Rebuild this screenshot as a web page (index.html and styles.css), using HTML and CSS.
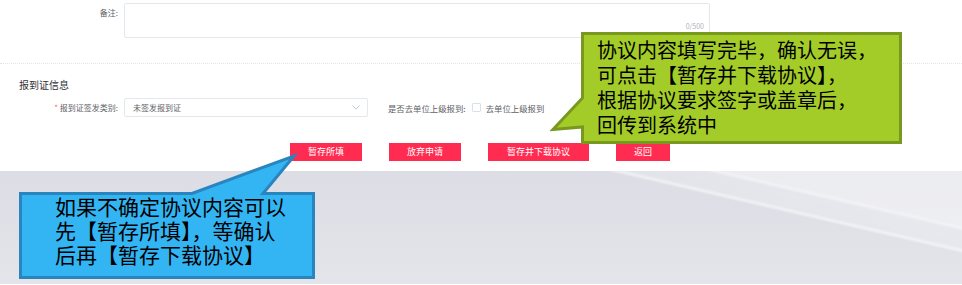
FILE: index.html
```html
<!DOCTYPE html>
<html lang="zh-CN">
<head>
<meta charset="utf-8">
<title>报到证信息</title>
<link rel="stylesheet" href="styles.css">
</head>
<body>
<div class="page">
  <div class="form">
    <div class="remark-row">
      <label class="lbl lbl-top">备注:</label>
      <div class="textarea"><span class="count">0/500</span></div>
    </div>
    <div class="divider"></div>
    <div class="section-title">报到证信息</div>
    <div class="field-row">
      <div class="field">
        <label class="lbl"><span class="req">*</span> 报到证签发类别:</label>
        <div class="select">
          <span class="select-text">未签发报到证</span>
          <svg class="chevron" width="8" height="5" viewBox="0 0 8 5"><path d="M0.5 0.5 L4 4 L7.5 0.5" fill="none" stroke="#c0c4cc" stroke-width="0.9"/></svg>
        </div>
      </div>
      <div class="field field-check">
        <label class="lbl2">是否去单位上级报到:</label>
        <span class="checkbox"></span>
        <span class="cb-text">去单位上级报到</span>
      </div>
    </div>
    <div class="actions">
      <button class="btn btn-w72">暂存所填</button>
      <button class="btn btn-w72">放弃申请</button>
      <button class="btn btn-w101">暂存并下载协议</button>
      <button class="btn btn-w54">返回</button>
    </div>
  </div>
  <div class="footer-bg"></div>

  <div class="callout callout-green">
    <svg class="callout-shape" width="356" height="118" viewBox="0 0 356 118">
      <path d="M32.5 3.5 H350.5 V112.5 H32.5 V97 L3 99.5 L32.5 68 Z" fill="#a4cc29" stroke="#78981f" stroke-width="3" stroke-linejoin="miter"/>
    </svg>
    <div class="callout-text green-text">协议内容填写完毕，确认无误，<br>可点击【暂存并下载协议】，<br>根据协议要求签字或盖章后，<br>回传到系统中</div>
  </div>

  <div class="callout callout-blue">
    <svg class="callout-shape" width="302" height="132" viewBox="0 0 302 132">
      <path d="M4.5 43.5 H176 L278 6 L247 43.5 H297.5 V127.5 H4.5 Z" fill="#33b5f4" stroke="#2a85be" stroke-width="3" stroke-linejoin="miter"/>
    </svg>
    <div class="callout-text blue-text">如果不确定协议内容可以<br>先【暂存所填】，等确认<br>后再【暂存下载协议】</div>
  </div>
</div>
</body>
</html>
```

FILE: styles.css
```css
html, body {
  margin: 0;
  padding: 0;
  background: #ffffff;
}

body {
  font-family: "Noto Sans CJK SC", "Liberation Sans", sans-serif;
  color: #333;
}

.page {
  position: relative;
  width: 962px;
  height: 285px;
  overflow: hidden;
}

.form {
  display: flex;
  flex-direction: column;
}

.remark-row {
  display: flex;
  padding-top: 3px;
}

.lbl {
  width: 118px;
  padding-right: 6px;
  text-align: right;
  font-size: 8px;
  line-height: 10px;
  color: #606266;
  white-space: nowrap;
  flex: none;
}

.lbl-top {
  padding-top: 5px;
}

.req {
  color: #f56c6c;
}

.textarea {
  position: relative;
  width: 584px;
  height: 33px;
  border: 1px solid #e4e7ed;
  border-radius: 2px;
  background: #fff;
}

.count {
  position: absolute;
  right: 5px;
  bottom: 7px;
  font-size: 7px;
  line-height: 8px;
  color: #b0b3b8;
}

.divider {
  margin-top: 25px;
  height: 0;
  border-top: 1px dotted #e2e4e8;
}

.section-title {
  margin-top: 15px;
  padding-left: 19px;
  font-size: 10px;
  line-height: 12px;
  color: #303133;
}

.field-row {
  display: flex;
  align-items: center;
  margin-top: 7px;
}

.field {
  display: flex;
  align-items: center;
}

.select {
  display: flex;
  align-items: center;
  justify-content: space-between;
  height: 17px;
  border: 1px solid #e4e7ed;
  border-radius: 2px;
  padding: 0 7px 0 8px;
  box-sizing: content-box;
  width: 227px;
}

.select-text {
  font-size: 8px;
  line-height: 10px;
  color: #606266;
}

.chevron {
  display: block;
}

.field-check {
  margin-left: 20px;
}

.lbl2 {
  font-size: 8.4px;
  line-height: 10px;
  color: #606266;
  white-space: nowrap;
}

.checkbox {
  width: 7px;
  height: 7px;
  margin-left: 6px;
  border: 1px solid #dcdfe6;
  border-radius: 1px;
  background: #fff;
}

.cb-text {
  margin-left: 5px;
  font-size: 8.4px;
  line-height: 10px;
  color: #606266;
}

.actions {
  display: flex;
  gap: 27px;
  margin-top: 26px;
  padding-left: 290px;
}

.btn {
  height: 18px;
  border: none;
  border-radius: 0;
  padding: 0;
  background: #ff2b50;
  color: #fff;
  font-family: "Noto Sans CJK SC", sans-serif;
  font-size: 9px;
  line-height: 18px;
  cursor: pointer;
}

.btn-w72 { width: 72px; }
.btn-w101 { width: 101px; }
.btn-w54 { width: 54px; }

.footer-bg {
  margin-top: 10px;
  height: 113px;
  background:
    linear-gradient(13deg,
      rgba(255,255,255,0) 0,
      rgba(255,255,255,0) 246px,
      rgba(255,255,255,0.55) 249px,
      rgba(255,255,255,0.2) 252px,
      rgba(255,255,255,0.25) 268px,
      rgba(255,255,255,0.6) 271px,
      rgba(255,255,255,0.45) 274px,
      rgba(255,255,255,0.45) 100%),
    linear-gradient(180deg, #dcdde5 0, #e4e5ea 100%);
}

.callout {
  position: absolute;
}

.callout-shape {
  position: absolute;
  left: 0;
  top: 0;
  display: block;
}

.callout-text {
  position: relative;
  color: #000;
  white-space: nowrap;
}

.callout-green {
  left: 550px;
  top: 30px;
  width: 356px;
  height: 118px;
}

.green-text {
  padding-left: 47px;
  padding-top: 7px;
  font-size: 20px;
  line-height: 25px;
}

.callout-blue {
  left: 16px;
  top: 150px;
  width: 302px;
  height: 132px;
}

.blue-text {
  padding-left: 39px;
  padding-top: 44px;
  font-size: 21px;
  line-height: 24px;
}
```
